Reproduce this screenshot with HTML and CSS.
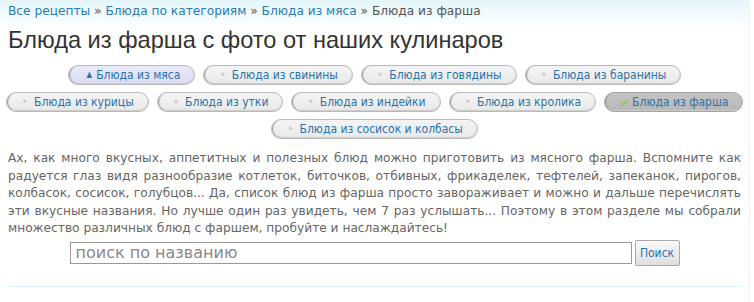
FILE: index.html
```html
<!DOCTYPE html>
<html>
<head>
    <title>Блюда из фарша</title>
    <link rel="stylesheet" href="styles.css">
</head>
<body>
    <div class="page">
        <div class="crumbs">
            <a href="#">Все рецепты</a> » <a href="#">Блюда по категориям</a> » <a href="#">Блюда из мяса</a> » <span>Блюда из фарша</span>
        </div>

        <h1>Блюда из фарша с фото от наших кулинаров</h1>

        <div class="tags">
            <a href="#" class="tag tag-up"><span class="mark">▲</span>Блюда из мяса</a>
            <a href="#" class="tag"><span class="mark">•</span>Блюда из свинины</a>
            <a href="#" class="tag"><span class="mark">•</span>Блюда из говядины</a>
            <a href="#" class="tag"><span class="mark">•</span>Блюда из баранины</a>
            <a href="#" class="tag"><span class="mark">•</span>Блюда из курицы</a>
            <a href="#" class="tag"><span class="mark">•</span>Блюда из утки</a>
            <a href="#" class="tag"><span class="mark">•</span>Блюда из индейки</a>
            <a href="#" class="tag"><span class="mark">•</span>Блюда из кролика</a>
            <a href="#" class="tag tag-current"><svg class="check" width="9" height="8" viewBox="0 0 9 8"><path d="M1 4.5 L3.3 7 L8 1" fill="none" stroke="#9cc63e" stroke-width="1.6"/></svg>Блюда из фарша</a>
            <a href="#" class="tag"><span class="mark">•</span>Блюда из сосисок и колбасы</a>
        </div>

        <p class="intro">Ах, как много вкусных, аппетитных и полезных блюд можно приготовить из мясного фарша. Вспомните как радуется глаз видя разнообразие котлеток, биточков, отбивных, фрикаделек, тефтелей, запеканок, пирогов, колбасок, сосисок, голубцов... Да, список блюд из фарша просто завораживает и можно и дальше перечислять эти вкусные названия. Но лучше один раз увидеть, чем 7 раз услышать... Поэтому в этом разделе мы собрали множество различных блюд с фаршем, пробуйте и наслаждайтесь!</p>

        <form class="search" onsubmit="return false">
            <input type="text" class="search-input" placeholder="поиск по названию">
            <button class="search-button">Поиск</button>
        </form>

        <div class="line"></div>
    </div>
</body>
</html>
```

FILE: styles.css
```css
body {
    margin: 0;
    font-family: "DejaVu Sans", Verdana, sans-serif;
    background-color: #fff;
}

.page {
    width: 750px;
    box-sizing: border-box;
    padding: 3px 8px 0 8px;
    border-right: 1px solid #f0f3f4;
    background: linear-gradient(#e4f6fb, #fff 28px);
    height: 302px;
}

.crumbs {
    font-size: 12.2px;
    color: #555;
    line-height: 16px;
}

.crumbs a {
    color: #2a7cb3;
    text-decoration: none;
}

h1 {
    font-family: "Liberation Sans", Arial, sans-serif;
    font-weight: normal;
    font-size: 23.6px;
    color: #333;
    margin: 7px 0 11px 0;
    line-height: 28px;
}

.tags {
    display: flex;
    flex-wrap: wrap;
    justify-content: center;
    column-gap: 8px;
    row-gap: 7px;
    margin: 0 -6px;
}

.tag {
    display: flex;
    align-items: center;
    height: 18px;
    line-height: 18px;
    padding: 0 14px 0 15px;
    font-family: "DejaVu Sans Condensed", "DejaVu Sans", sans-serif;
    font-size: 12px;
    color: #2b72ad;
    text-decoration: none;
    background: linear-gradient(#f4f4f4, #e9e9e9);
    border: 1px solid #b9b9b9;
    border-radius: 11px;
    box-shadow: inset 2px 0 1px -1px #999, inset 0 -1px 1px #ccc;
}

.mark {
    color: #ccc;
    margin-right: 6px;
}

.tag-up {
    background: linear-gradient(#e8e8fa, #dcdcf4);
}

.tag-up .mark {
    color: #2b72ad;
    font-size: 8px;
    margin-left: 3px;
    margin-right: 4px;
}

.tag-current {
    background: linear-gradient(#c4c4c4, #b7b7b7);
    border-color: #a5a5a5;
}

.check {
    margin-right: 3px;
}

.intro {
    font-size: 12.2px;
    color: #666;
    line-height: 17.5px;
    text-align: justify;
    margin: 11px 0 0 0;
}

.search {
    display: flex;
    justify-content: center;
    align-items: center;
    gap: 3px;
    margin-top: 2px;
}

.search-input {
    width: 562px;
    height: 22px;
    box-sizing: border-box;
    border: 1px solid #999;
    padding: 0 5px;
    font-family: "DejaVu Sans", Verdana, sans-serif;
    font-size: 16px;
    color: #666;
}

.search-input::placeholder {
    color: #888;
}

.search-button {
    height: 26px;
    width: 45px;
    padding: 0;
    font-family: "DejaVu Sans Condensed", "DejaVu Sans", sans-serif;
    font-size: 12px;
    color: #2b72ad;
    background: linear-gradient(#fafafa, #dedede);
    border: 1px solid #aaa;
    border-radius: 2px;
}

.line {
    height: 1px;
    background-color: #dff5fa;
    margin: 20px -2px 0 -2px;
}
```
